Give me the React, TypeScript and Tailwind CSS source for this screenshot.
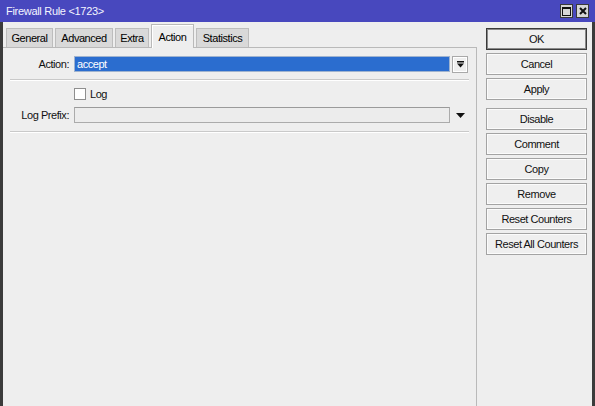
import React from "react";

const Btn = ({ label, def }: { label: string; def?: boolean }) => (
  <div
    className={
      "w-[101px] h-[22px] flex items-center justify-center whitespace-nowrap bg-[#efefef] text-[11px] tracking-[-0.45px] text-[#111] " +
      (def
        ? "border border-[#3a3a3a] shadow-[inset_0_0_0_1px_#8a8a8a]"
        : "border border-[#a3a3a3] shadow-[inset_0_0_0_1px_#fbfbfb]")
    }
  >
    {label}
  </div>
);

const Tab = ({ label, w, active }: { label: string; w: string; active?: boolean }) =>
  active ? (
    <div
      className={
        w +
        " h-[24px] relative z-10 -mb-px bg-[#eeeeee] border border-b-0 border-[#b9b9b9] shadow-[inset_1px_1px_0_#ffffff] flex items-start justify-center pt-[4px] text-[11px] tracking-[-0.45px] whitespace-nowrap"
      }
    >
      {label}
    </div>
  ) : (
    <div
      className={
        w +
        " h-[19px] bg-[#d9d9d9] border border-b-0 border-[#bdbdbd] flex items-center justify-center text-[11px] tracking-[-0.45px] whitespace-nowrap"
      }
    >
      {label}
    </div>
  );

export default function App() {
  return (
    <div className="w-[595px] h-[406px] overflow-hidden bg-[#3b3b3b] flex flex-col font-['Liberation_Sans',Arial,sans-serif] text-black">
      {/* Title bar */}
      <div className="h-[22px] shrink-0 bg-[#4848be] flex items-center pl-[6px] pr-[6px]">
        <span className="flex-1 text-[11px] tracking-[-0.3px] text-[#f4f4ff] leading-none whitespace-nowrap">Firewall Rule &lt;1723&gt;</span>
        <div className="flex gap-[3px]">
          <div className="w-[13px] h-[14px] bg-[#d6d6d6] border border-[#3a3a3a] flex items-center justify-center">
            <svg width="9" height="9" viewBox="0 0 9 9">
              <rect x="0.5" y="0.5" width="8" height="8" fill="none" stroke="#111" strokeWidth="1" />
              <rect x="0" y="0" width="9" height="2" fill="#111" />
            </svg>
          </div>
          <div className="w-[13px] h-[14px] bg-[#d6d6d6] border border-[#3a3a3a] flex items-center justify-center">
            <svg width="8" height="8" viewBox="0 0 8 8">
              <path d="M1 1 L7 7 M7 1 L1 7" stroke="#111" strokeWidth="2" />
            </svg>
          </div>
        </div>
      </div>

      {/* Body */}
      <div className="flex-1 flex px-[3px]">
        <div className="flex-1 flex bg-[#eeeeee]">
          {/* Left: tabs + panel */}
          <div className="w-[474px] flex flex-col">
            <div className="h-[25px] shrink-0 flex items-end pl-[3px] gap-[2px]">
              <Tab label="General" w="w-[47px]" />
              <Tab label="Advanced" w="w-[58px]" />
              <Tab label="Extra" w="w-[34px]" />
              <Tab label="Action" w="w-[43px]" active />
              <Tab label="Statistics" w="w-[53px]" />
            </div>
            <div className="flex-1 border-t border-r border-[#b9b9b9] flex flex-col pt-[8px] text-[11px] tracking-[-0.45px] text-[#111] whitespace-nowrap">
              {/* Action row */}
              <div className="flex items-center h-[16px]">
                <div className="w-[66px] text-right">Action:</div>
                <div className="ml-[5px] w-[376px] h-[16px] border border-[#9fb3cf] bg-[#2b6dcf] flex items-center pl-[2px]">
                  <span className="text-white leading-none">accept</span>
                </div>
                <div className="ml-[2px] w-[16px] h-[17px] border border-[#a9a9a9] bg-[#efefef] shadow-[inset_0_0_0_1px_#ffffff] flex items-center justify-center">
                  <svg width="7" height="7" viewBox="0 0 7 7">
                    <rect x="0" y="0" width="7" height="1.5" fill="#111" />
                    <path d="M0 2.5 L7 2.5 L3.5 6.5 Z" fill="#111" />
                  </svg>
                </div>
              </div>
              <div className="mt-[7px] mx-[7px] h-px bg-[#c9c9c9] shadow-[0_1px_0_#ffffff]" />
              {/* Log row */}
              <div className="mt-[8px] flex items-center h-[12px]">
                <div className="ml-[71px] w-[12px] h-[12px] bg-white border border-[#8e8e8e]" />
                <span className="ml-[4px]">Log</span>
              </div>
              {/* Log prefix row */}
              <div className="mt-[7px] flex items-center h-[16px]">
                <div className="w-[66px] text-right">Log Prefix:</div>
                <div className="ml-[5px] w-[376px] h-[16px] border border-[#ababab] border-t-[#9a9a9a] bg-[#ececec]" />
                <div className="ml-[2px] w-[16px] h-[16px] flex items-center justify-center">
                  <svg width="9" height="5" viewBox="0 0 9 5">
                    <path d="M0 0 L9 0 L4.5 5 Z" fill="#111" />
                  </svg>
                </div>
              </div>
              <div className="mt-[8px] mx-[7px] h-px bg-[#c9c9c9] shadow-[0_1px_0_#ffffff]" />
            </div>
          </div>

          {/* Right: buttons */}
          <div className="flex flex-col pl-[9px] pt-[6px]">
            <Btn label="OK" def />
            <div className="mt-[3px]"><Btn label="Cancel" /></div>
            <div className="mt-[3px]"><Btn label="Apply" /></div>
            <div className="mt-[8px]"><Btn label="Disable" /></div>
            <div className="mt-[3px]"><Btn label="Comment" /></div>
            <div className="mt-[3px]"><Btn label="Copy" /></div>
            <div className="mt-[3px]"><Btn label="Remove" /></div>
            <div className="mt-[3px]"><Btn label="Reset Counters" /></div>
            <div className="mt-[3px]"><Btn label="Reset All Counters" /></div>
          </div>
        </div>
      </div>
    </div>
  );
}
